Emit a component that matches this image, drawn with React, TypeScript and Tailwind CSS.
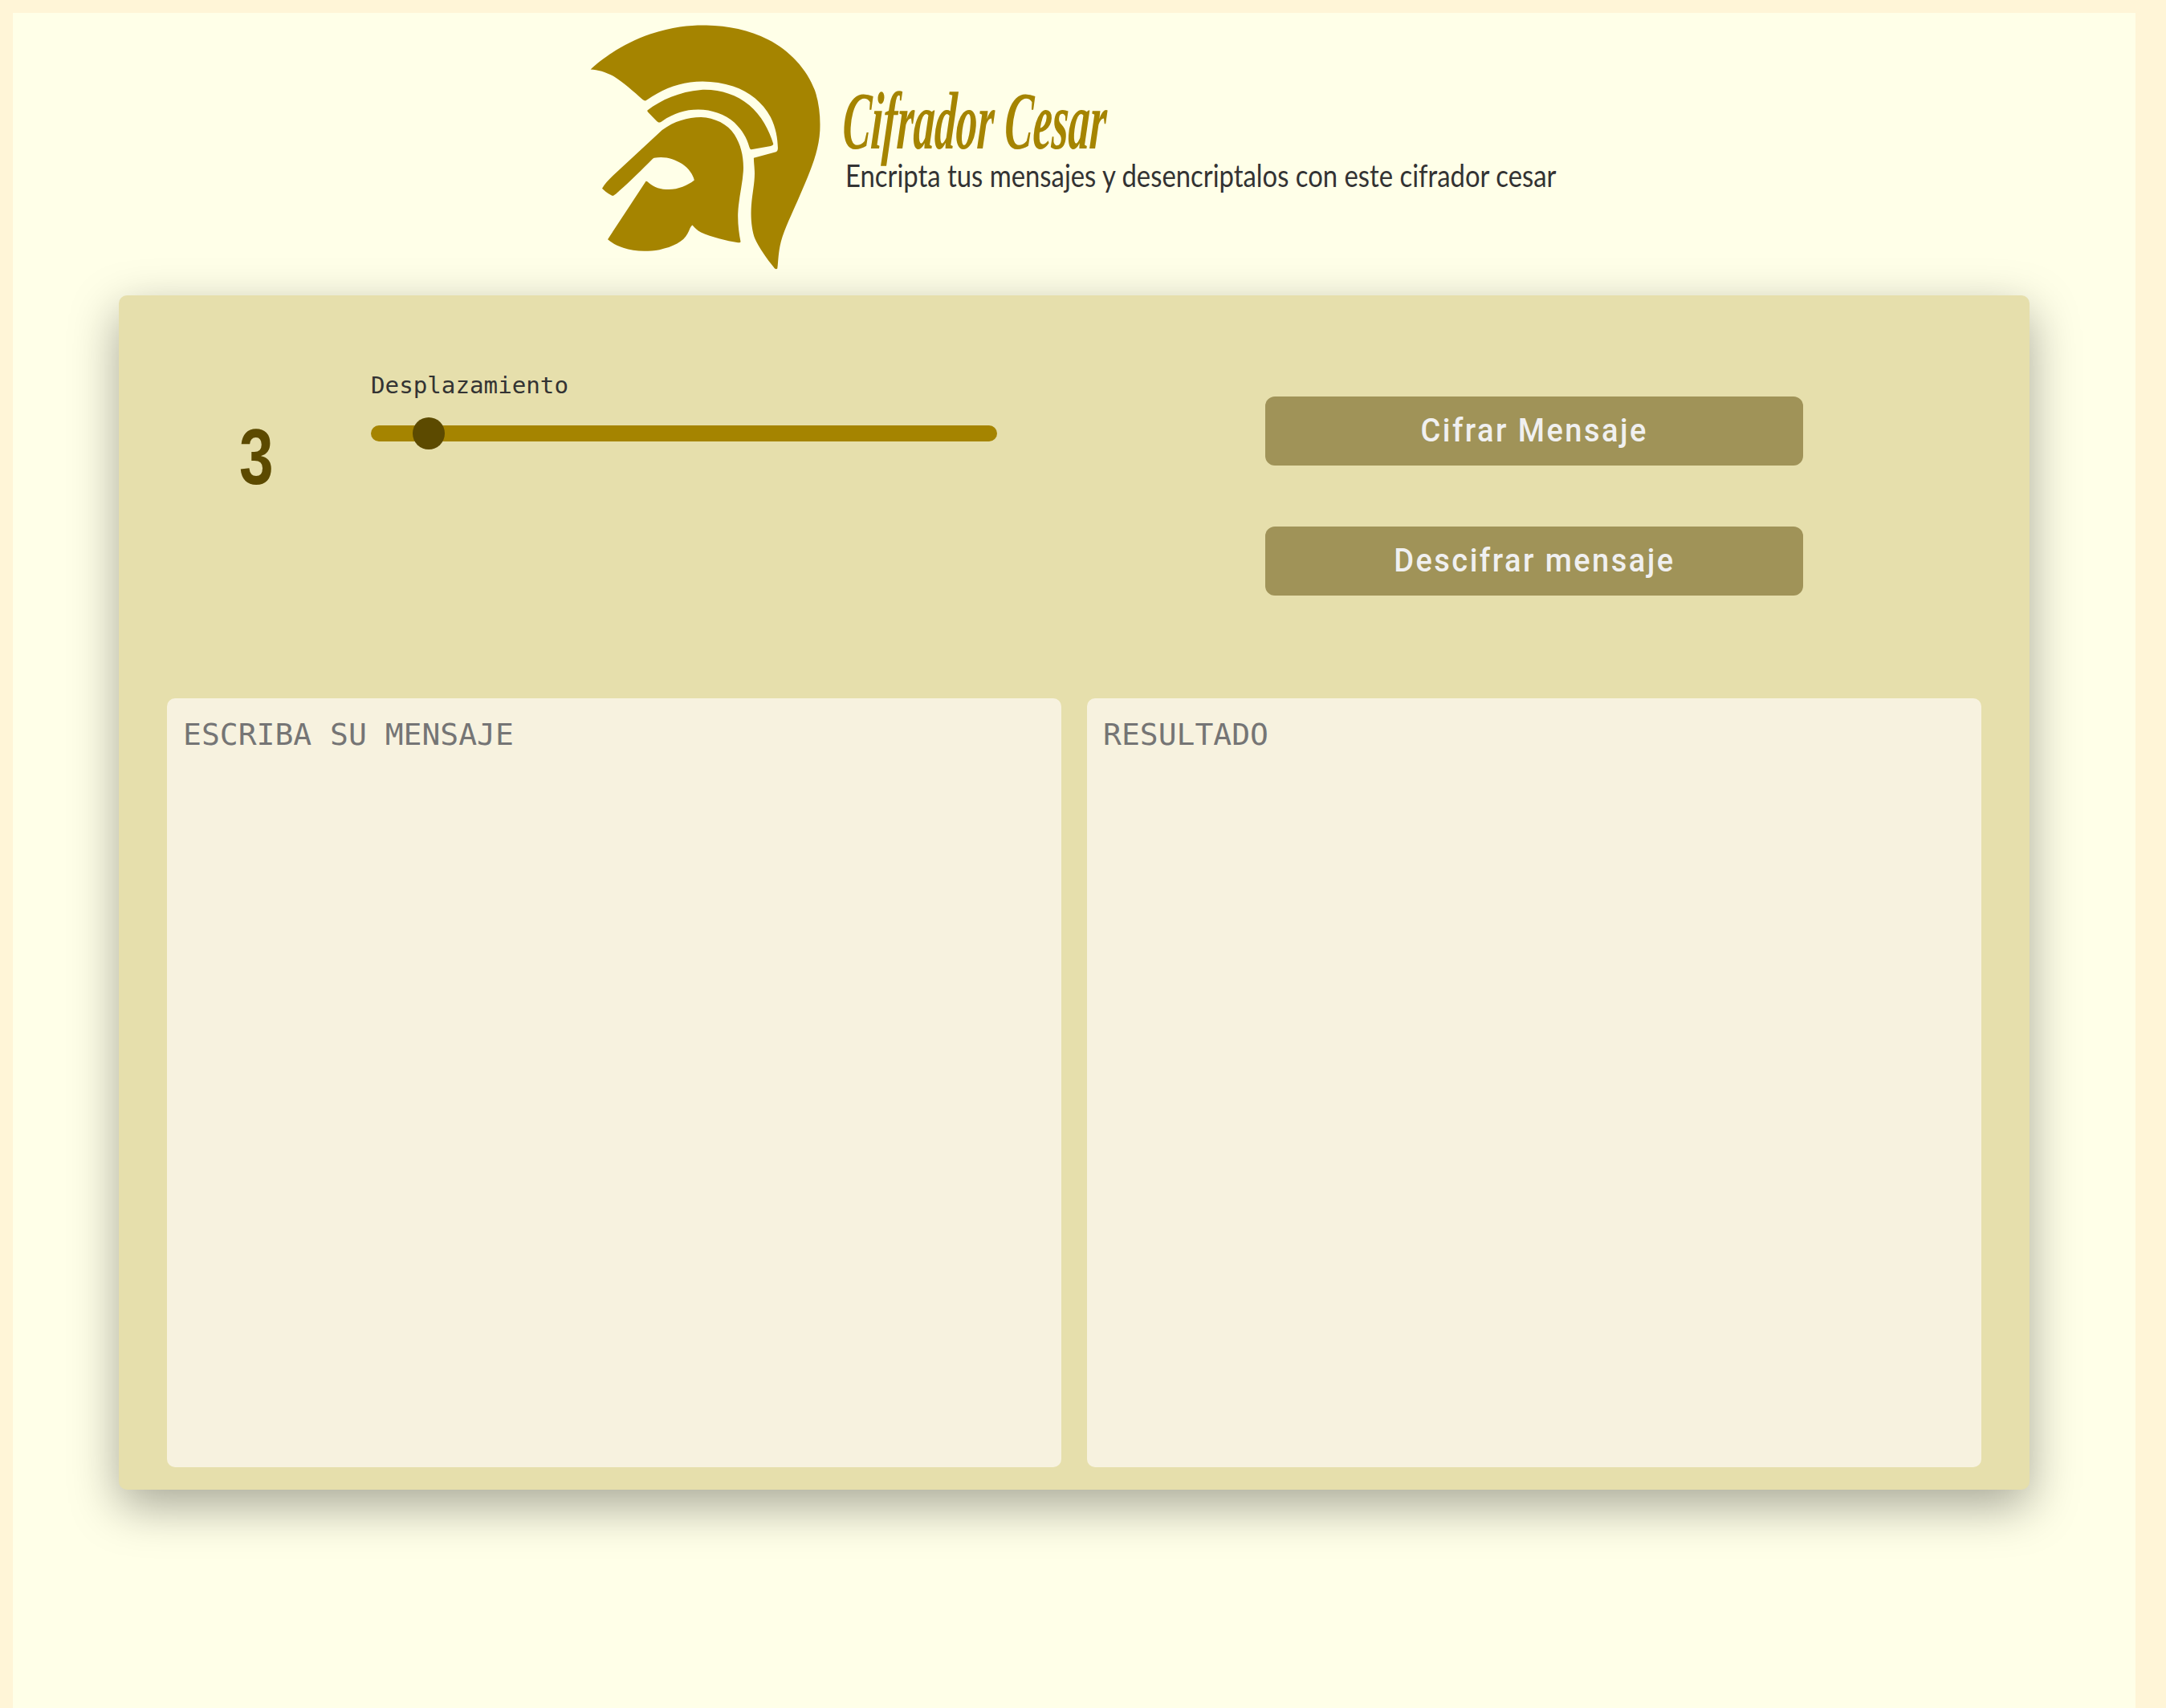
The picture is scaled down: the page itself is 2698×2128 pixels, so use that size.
export default function App() {
  return (
    <div className="min-h-[2128px] bg-[#fff5d7] pt-4 pl-4 pr-[38px] font-['DejaVu_Sans_Mono',monospace]">
      <div className="h-[2112px] bg-[#ffffe8] flex flex-col items-center">
        <header className="flex items-start h-[352px] w-[1203px] pt-[13px]">
          <svg viewBox="100 90 875 925" className="w-[292px] h-[309px] shrink-0 -ml-1" fill="#a58400">
            <path d="M108 262 C150 220 240 160 330 130 C420 100 490 96 540 97 C620 98 700 115 770 150 C850 190 915 260 945 340 C962 390 966 440 964 490 C960 570 925 650 890 730 C860 800 825 870 815 920 C808 955 808 985 805 1005 C800 1010 795 1005 790 998 C770 975 735 925 722 895 C708 860 705 810 708 770 C712 720 722 680 720 640 C719 620 717 605 717 592 L800 570 C805 568 807 563 807 555 C806 520 800 480 780 440 C750 385 700 345 640 325 C590 308 530 303 480 310 C420 318 370 340 318 376 C312 380 308 379 303 375 C270 345 230 310 195 288 C165 272 135 263 108 262 Z" />
            <path d="M320 415 C370 375 440 345 520 338 C590 335 650 355 700 395 C745 432 775 490 790 540 C790 545 785 547 780 548 L708 561 C703 560 702 555 700 550 C690 515 675 490 645 460 C610 430 560 412 510 412 C460 412 420 425 375 455 C365 462 360 460 355 455 L323 422 C320 419 319 417 320 415 Z" />
            <path d="M375 488 C420 455 470 440 520 440 C570 442 620 465 645 505 C670 545 680 590 678 640 C675 690 660 745 658 800 C657 840 662 875 668 905 C667 908 663 908 658 908 C615 902 560 888 520 870 C505 862 497 853 488 843 C480 848 478 860 470 875 C455 905 415 925 365 935 C320 942 270 942 230 928 C205 920 185 908 172 896 L314 680 C316 678 319 680 325 685 C345 703 370 710 400 710 C435 709 470 695 495 675 C490 655 475 632 450 615 C420 595 385 585 345 592 L340 595 C300 635 250 685 215 715 C205 725 195 733 190 734 C178 728 160 716 151 706 C160 690 175 675 190 660 Z" />
          </svg>
          <div className="ml-[25px] flex flex-col items-start">
            <h1 className="mt-[76px] h-[92px] text-[102px] leading-[92px] font-bold italic text-[#a58400] whitespace-nowrap origin-left scale-x-[0.52] -skew-x-6 font-['Liberation_Serif',serif]">Cifrador Cesar</h1>
            <p className="-mt-px ml-[3px] text-[38px] leading-[44px] text-[#333333] whitespace-nowrap origin-left scale-x-[0.864] font-['Lato',sans-serif]">Encripta tus mensajes y desencriptalos con este cifrador cesar</p>
          </div>
        </header>
        <main className="w-[2380px] h-[1488px] rounded-[10px] bg-[#e6dfac] shadow-[0_20px_60px_rgba(0,0,0,0.35)] px-[60px] pb-7 flex flex-col">
          <section className="flex h-[502px]">
            <div className="w-[254px] pl-[90px] pt-[145px]">
              <span className="block text-[98px] leading-[112px] text-[#5c4a00] origin-left scale-x-[0.78] font-['Liberation_Sans',sans-serif] font-bold">3</span>
            </div>
            <div className="w-[780px] pt-[94px] shrink-0">
              <label className="block text-[29.2px] leading-[36px] text-[#333333]">Desplazamiento</label>
              <input type="range" min={0} max={1000} defaultValue={70} className="mt-8 block w-[780px] h-5 appearance-none rounded-[10px] bg-[#a58400] [&::-webkit-slider-thumb]:appearance-none [&::-webkit-slider-thumb]:w-10 [&::-webkit-slider-thumb]:h-10 [&::-webkit-slider-thumb]:rounded-full [&::-webkit-slider-thumb]:bg-[#5c4a00]" />
            </div>
            <div className="ml-[334px] pt-[126px] flex flex-col gap-[76px]">
              <Btn label="Cifrar Mensaje" />
              <Btn label="Descifrar mensaje" />
            </div>
          </section>
          <section className="flex-1 flex gap-8">
            <textarea placeholder="ESCRIBA SU MENSAJE" className="flex-1 resize-none rounded-[10px] bg-[#f7f2df] px-5 py-[23px] text-[38px] leading-[44px] placeholder:text-[#757575] outline-none" />
            <textarea placeholder="RESULTADO" className="flex-1 resize-none rounded-[10px] bg-[#f7f2df] px-5 py-[23px] text-[38px] leading-[44px] placeholder:text-[#757575] outline-none" />
          </section>
        </main>
      </div>
    </div>
  );
}

function Btn({ label }: { label: string }) {
  return (
    <button className="w-[670px] h-[86px] rounded-xl bg-[#a09358] text-[#f0f0f0] flex items-center justify-center">
      <span className="inline-block text-[40px] leading-[48px] font-medium tracking-[2.6px] font-['Roboto',sans-serif] whitespace-nowrap scale-x-[0.95]">{label}</span>
    </button>
  );
}
